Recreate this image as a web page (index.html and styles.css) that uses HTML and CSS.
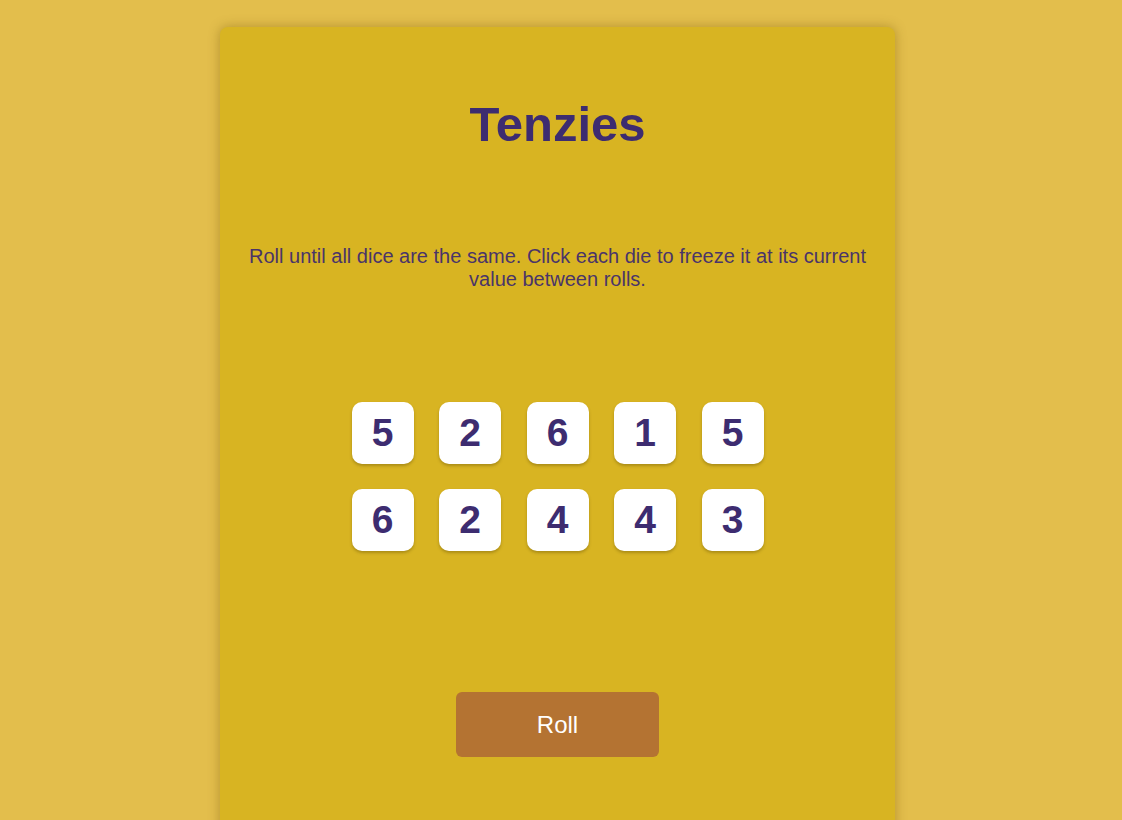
FILE: index.html
```html
<!DOCTYPE html>
<html lang="en">
<head>
<meta charset="utf-8">
<title>Tenzies</title>
<link rel="stylesheet" href="styles.css">
</head>
<body>
<main class="card">
  <h1 class="title">Tenzies</h1>
  <p class="instructions">Roll until all dice are the same. Click each die to freeze it at its current value between rolls.</p>
  <div class="dice">
    <button class="die">5</button>
    <button class="die">2</button>
    <button class="die">6</button>
    <button class="die">1</button>
    <button class="die">5</button>
    <button class="die">6</button>
    <button class="die">2</button>
    <button class="die">4</button>
    <button class="die">4</button>
    <button class="die">3</button>
  </div>
  <button class="roll">Roll</button>
</main>
</body>
</html>
```
FILE: styles.css
```css
html, body {
  margin: 0;
  padding: 0;
}
body {
  background: #e3be4c;
  font-family: "Liberation Sans", Arial, sans-serif;
  height: 820px;
  overflow: hidden;
  padding-right: 7px;
  box-sizing: border-box;
}
.card {
  width: 675px;
  height: 820px;
  margin: 27px auto 0;
  background: #d8b422;
  border-radius: 8px;
  box-shadow: 0 0 12px rgba(120, 90, 10, 0.45);
  display: flex;
  flex-direction: column;
  align-items: center;
  box-sizing: border-box;
  padding-top: 70px;
}
.title {
  margin: 0;
  font-size: 49px;
  font-weight: 700;
  color: #3d2c70;
  line-height: 55px;
}
.instructions {
  margin: 93px 0 0;
  padding: 0 24px;
  font-size: 20px;
  line-height: 23px;
  color: #4a3469;
  text-align: center;
}
.dice {
  margin-top: 111px;
  display: grid;
  grid-template-columns: repeat(5, 62px);
  column-gap: 25.5px;
  row-gap: 25px;
}
.die {
  width: 62px;
  height: 62px;
  border: none;
  border-radius: 10px;
  background: #ffffff;
  box-shadow: 0 2px 3px rgba(90, 70, 0, 0.35);
  font-family: "Liberation Sans", Arial, sans-serif;
  font-size: 39px;
  font-weight: 700;
  color: #3d2c70;
  padding: 0;
}
.roll {
  margin-top: 141px;
  width: 203px;
  height: 65px;
  border: none;
  border-radius: 6px;
  background: #b47332;
  color: #ffffff;
  font-family: "Liberation Sans", Arial, sans-serif;
  font-size: 24px;
}
```
